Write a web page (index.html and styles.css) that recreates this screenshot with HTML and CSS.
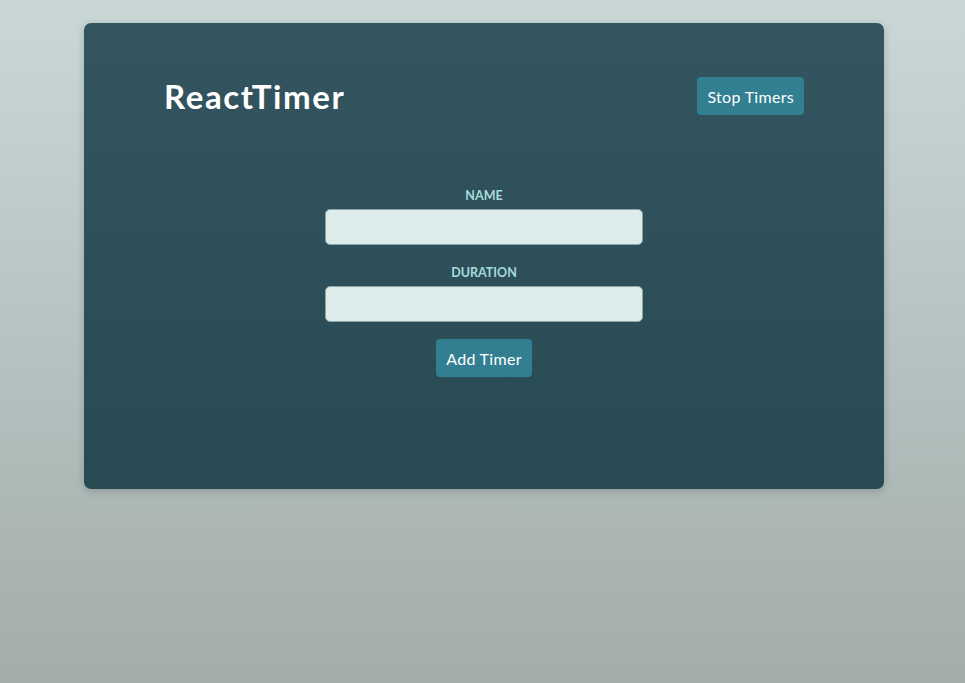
FILE: index.html
```html
<!DOCTYPE html>
<html>
<head>
<meta charset="utf-8">
<link rel="stylesheet" href="styles.css">
</head>
<body>
<div class="app">
  <div class="card">
    <header class="header">
      <h1 class="title">ReactTimer</h1>
      <button class="btn">Stop Timers</button>
    </header>
    <form class="form">
      <label class="label">Name</label>
      <input class="input" type="text">
      <label class="label">Duration</label>
      <input class="input" type="text">
      <button class="btn" type="button">Add Timer</button>
    </form>
  </div>
</div>
</body>
</html>
```
FILE: styles.css
```css
html, body {
  margin: 0;
  height: 100%;
}
body {
  background: linear-gradient(180deg, #c9d8d7 0%, #a3adab 100%);
  font-family: "Lato", "Noto Sans", sans-serif;
}
.app {
  padding-top: 23px;
  padding-left: 3px;
  display: flex;
  justify-content: center;
}
.card {
  width: 800px;
  height: 466px;
  box-sizing: border-box;
  border-radius: 7px;
  background: linear-gradient(180deg, #345560 0%, #284a53 100%);
  box-shadow: 0 2px 8px rgba(0,0,0,0.18);
  padding: 54px 80px 0;
}
.header {
  display: flex;
  justify-content: space-between;
  align-items: center;
  height: 38px;
}
.title {
  margin: 0;
  color: #ffffff;
  font-size: 33px;
  font-weight: 700;
  letter-spacing: 1.6px;
}
.btn {
  background: #317f90;
  color: #ffffff;
  border: none;
  border-radius: 4px;
  font-family: "Lato", "Noto Sans", sans-serif;
  font-size: 16px;
  letter-spacing: 0.3px;
  height: 38px;
  padding: 0 10px;
  cursor: pointer;
}
.form {
  margin-top: 74px;
  display: flex;
  flex-direction: column;
  align-items: center;
}
.label {
  display: block;
  color: #a6dcd8;
  font-size: 12.5px;
  font-weight: 700;
  text-transform: uppercase;
  line-height: 14px;
  margin-bottom: 6px;
}
.input {
  width: 318px;
  height: 36px;
  box-sizing: border-box;
  background: #dbeceb;
  border: 1px solid #8fa3a2;
  border-radius: 5px;
  margin-bottom: 21px;
}
.form .btn {
  margin-top: -4px;
}
```
